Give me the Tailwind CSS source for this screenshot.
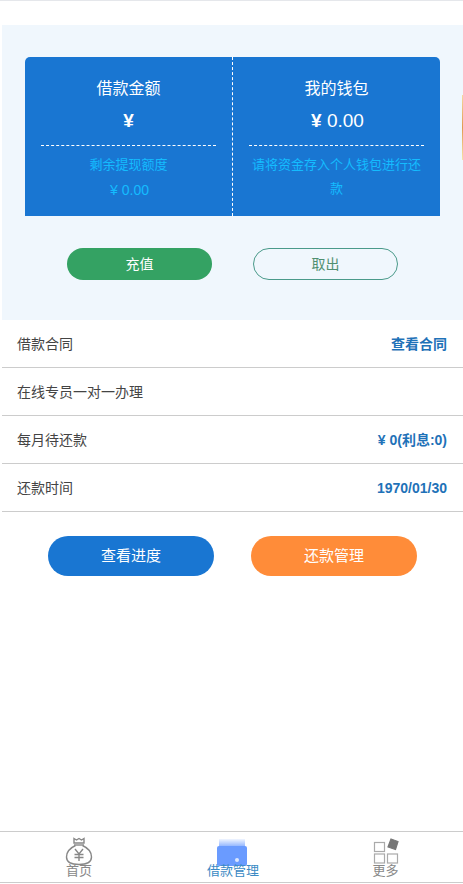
<!DOCTYPE html>
<html lang="zh-CN">

<head>
  <meta charset="UTF-8">
  <meta name="viewport" content="width=device-width, initial-scale=1.0">
  <title>借款管理</title>
  <script src="https://cdn.jsdelivr.net/npm/@tailwindcss/browser@4"></script>
</head>

<body class="bg-white w-[463px] h-[884px] overflow-hidden font-['Liberation_Sans','Noto_Sans_CJK_SC',sans-serif]">
  <div class="h-[884px] flex flex-col pl-[2px] border-t border-gray-200">
    <div class="h-[24px] shrink-0"></div>

    <!-- 钱包卡片 -->
    <div class="relative h-[295px] shrink-0 bg-[#f0f7fd] pt-[32px] pl-[23px]">
      <div class="absolute right-0 top-[70px] w-[1px] h-[65px] bg-linear-to-b from-[#f5d9a0] via-[#e09a50] to-[#f7e4a8]"></div>
      <div class="w-[415px] h-[159px] bg-[#1976d2] rounded-t-[5px] flex">
        <div class="w-[208px] px-[16px] border-r border-dashed border-white text-center">
          <p class="mt-[20px] text-white text-[16px] leading-[24px]">借款金额</p>
          <p class="mt-[8px] text-white text-[19px] leading-[24px]"><span class="font-bold">¥</span></p>
          <div class="mt-[12px] border-t border-dashed border-white pt-[7px] text-[#14bcff] text-[13px] leading-[24px]">
            <p>剩余提现额度</p>
            <p class="mt-[1px] pl-[2px] text-[14px]">¥ 0.00</p>
          </div>
        </div>
        <div class="w-[207px] px-[16px] text-center">
          <p class="mt-[20px] text-white text-[16px] leading-[24px]">我的钱包</p>
          <p class="mt-[8px] pl-[2px] text-white text-[19px] leading-[24px]"><span class="font-bold">¥</span> 0.00</p>
          <div class="mt-[12px] border-t border-dashed border-white pt-[7px] text-[#14bcff] text-[13px] leading-[24px]">
            <p>请将资金存入个人钱包进行还款</p>
          </div>
        </div>
      </div>
      <div class="mt-[32px] pl-[42px] flex gap-[41px]">
        <button class="w-[145px] h-[32px] rounded-full bg-[#34a263] text-white text-[14px]">充值</button>
        <button class="w-[145px] h-[32px] rounded-full border border-[#4a9a8a] text-[#4f8f70] text-[14px]">取出</button>
      </div>
    </div>

    <!-- 明细 -->
    <div class="text-[14px] text-[#444]">
      <div class="h-[48px] flex items-center justify-between pl-[15px] pr-[16px] pt-[2px] border-b border-[#ccc]">
        <span>借款合同</span><span class="font-bold text-[#1f72b8]">查看合同</span>
      </div>
      <div class="h-[48px] flex items-center justify-between pl-[15px] pr-[16px] pt-[2px] border-b border-[#ccc]">
        <span>在线专员一对一办理</span>
      </div>
      <div class="h-[48px] flex items-center justify-between pl-[15px] pr-[16px] pt-[2px] border-b border-[#ccc]">
        <span>每月待还款</span><span class="font-bold text-[#1f72b8]">¥ 0(利息:0)</span>
      </div>
      <div class="h-[48px] flex items-center justify-between pl-[15px] pr-[16px] pt-[2px] border-b border-[#ccc]">
        <span>还款时间</span><span class="font-bold text-[#1f72b8]">1970/01/30</span>
      </div>
    </div>

    <div class="mt-[24px] pl-[46px] flex gap-[37px]">
      <button class="w-[166px] h-[40px] rounded-full bg-[#1976d2] text-white text-[15px]">查看进度</button>
      <button class="w-[166px] h-[40px] rounded-full bg-[#ff8c39] text-white text-[15px]">还款管理</button>
    </div>

    <div class="flex-1"></div>

    <!-- 底部导航 -->
    <div class="h-[52px] mb-[1px] shrink-0 border-y border-[#ccc] flex text-[13px] leading-[16px] text-[#888] -ml-[2px]">
      <a class="w-[158px] flex flex-col items-center relative">
        <svg class="mt-[5px]" width="28" height="29" viewBox="0 0 28 29" fill="none" stroke="#888" stroke-width="1.4">
          <path d="M9 1.500l2.500 1.500L14 1.500l2.500 1.500L19 1.500V6H9z" />
          <path d="M9 8h10" />
          <path d="M10.500 8.500C5 11 1.500 15.500 1.500 20c0 5 5 7.500 12.500 7.500S26.500 25 26.500 20c0-4.500-3.500-9-9-11.500" />
          <path d="M10 12l4 5 4-5M9.500 17.500h9M9.500 20.500h9M14 17v7" />
        </svg>
        <span class="absolute top-[31px]">首页</span>
      </a>
      <a class="w-[150px] flex flex-col items-center relative text-[#3b8ac4]">
        <svg class="mt-[7px] -ml-[2px]" width="32" height="27" viewBox="0 0 32 27">
          <defs>
            <linearGradient id="walletTop" x1="0" y1="0" x2="0" y2="1">
              <stop offset="0" stop-color="#6a9bff" stop-opacity="0.1" />
              <stop offset="1" stop-color="#6a9bff" stop-opacity="0.7" />
            </linearGradient>
          </defs>
          <path d="M3 0h26v7H3z" fill="url(#walletTop)" />
          <rect x="1" y="7" width="30" height="20" rx="2" fill="#6a9bff" />
          <circle cx="21" cy="21" r="2" fill="#dbe7ff" />
        </svg>
        <span class="absolute top-[31px]">借款管理</span>
      </a>
      <a class="flex-1 flex flex-col items-center relative">
        <svg class="mt-[6px]" width="26" height="26" viewBox="0 0 26 26" fill="none" stroke="#aaa" stroke-width="1.2">
          <rect x="1.500" y="4.500" width="10" height="9" />
          <rect x="1.500" y="16" width="10" height="9" />
          <rect x="14.500" y="16" width="10" height="9" />
          <path d="M18 1l7 2.500-2.500 8-7.500-2.500z" fill="#777" stroke="#777" />
        </svg>
        <span class="absolute top-[31px]">更多</span>
      </a>
    </div>
  </div>
</body>

</html>
